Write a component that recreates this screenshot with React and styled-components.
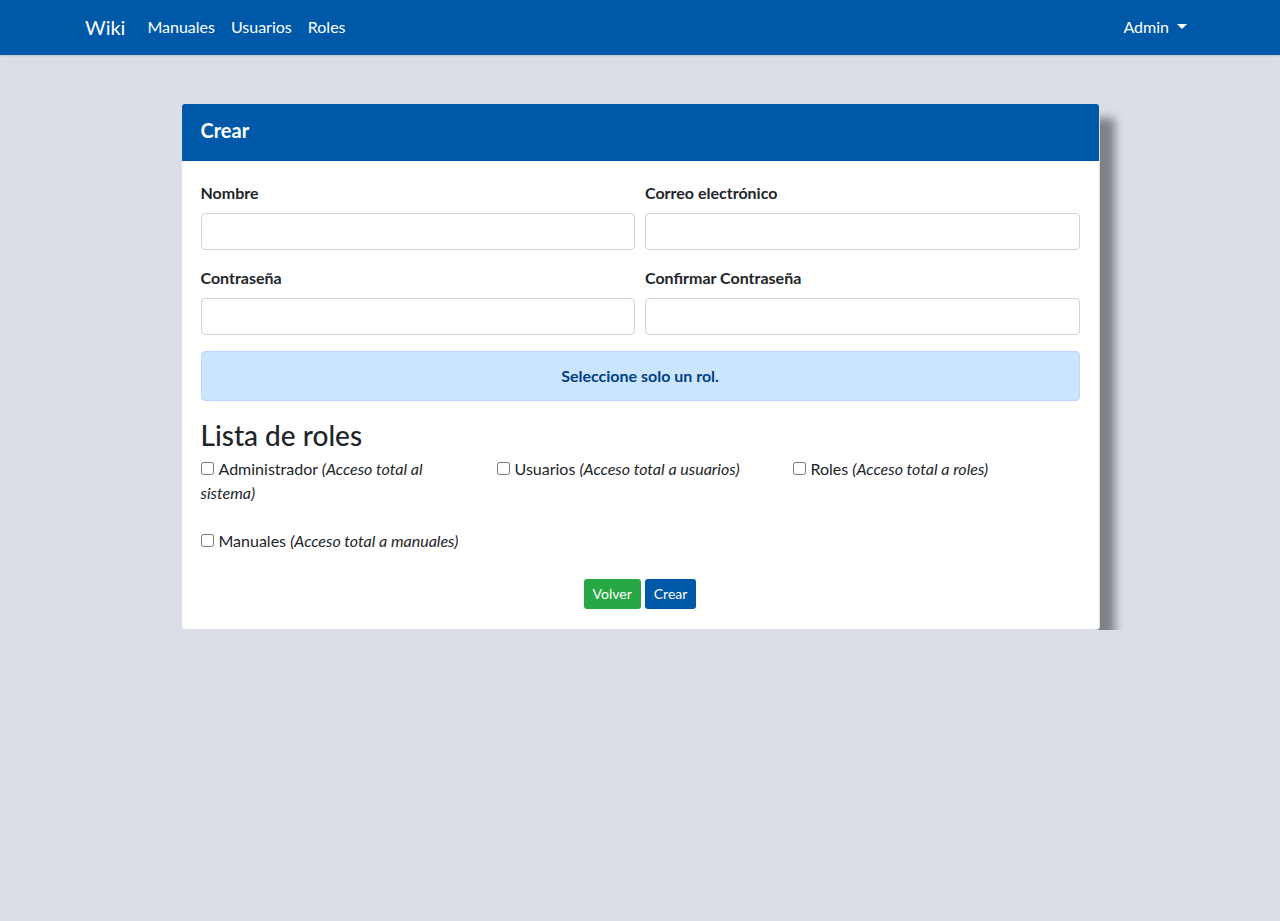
import React from 'react';
import styled, { createGlobalStyle } from 'styled-components';

const ROLES = [
  { name: 'Administrador', desc: 'Acceso total al sistema' },
  { name: 'Usuarios', desc: 'Acceso total a usuarios' },
  { name: 'Roles', desc: 'Acceso total a roles' },
  { name: 'Manuales', desc: 'Acceso total a manuales' },
];

const FIELDS = [
  { label: 'Nombre', type: 'text' },
  { label: 'Correo electrónico', type: 'email' },
  { label: 'Contraseña', type: 'password' },
  { label: 'Confirmar Contraseña', type: 'password' },
];

const App = () => {
  return (
    <>
      <GlobalStyle />
      <Navbar>
        <NavContainer>
          <Brand>Wiki</Brand>
          <NavLinks>
            <NavLink>Manuales</NavLink>
            <NavLink>Usuarios</NavLink>
            <NavLink>Roles</NavLink>
          </NavLinks>
          <Dropdown>
            Admin <Caret />
          </Dropdown>
        </NavContainer>
      </Navbar>
      <Main>
        <Card>
          <CardHeader>Crear</CardHeader>
          <CardBody>
            <FormGrid>
              {FIELDS.map((f) => (
                <FormGroup key={f.label}>
                  <Label>{f.label}</Label>
                  <Input type={f.type} />
                </FormGroup>
              ))}
            </FormGrid>
            <Alert>Seleccione solo un rol.</Alert>
            <Title>Lista de roles</Title>
            <RoleGrid>
              {ROLES.map((r) => (
                <RoleItem key={r.name}>
                  <Check type='checkbox' />
                  {r.name} <em>({r.desc})</em>
                </RoleItem>
              ))}
            </RoleGrid>
            <Actions>
              <Btn $color='#28a745'>Volver</Btn>
              <Btn $color='#0059a8'>Crear</Btn>
            </Actions>
          </CardBody>
        </Card>
      </Main>
    </>
  );
};

export default App;

const GlobalStyle = createGlobalStyle`
  body {
    margin: 0;
    background: #dadee6;
    font-family: 'Lato', 'Open Sans', sans-serif;
    font-size: 16px;
    line-height: 1.5;
    color: #212529;
  }
`;

const Navbar = styled.nav`
  height: 55px;
  background: #0059a8;
  box-shadow: 0 1px 2px rgba(0, 0, 0, 0.15);
`;

const NavContainer = styled.div`
  width: 1140px;
  margin: 0 auto;
  padding: 0 15px 2px;
  box-sizing: border-box;
  height: 100%;
  display: flex;
  align-items: center;
`;

const Brand = styled.span`
  font-size: 20px;
  color: #fff;
  margin-right: 14px;
`;

const NavLinks = styled.div`
  display: flex;
  flex: 1;
`;

const NavLink = styled.span`
  color: #fff;
  padding: 0 8px;
`;

const Dropdown = styled.span`
  color: #fff;
  padding: 0 8px;
  display: flex;
  align-items: center;
`;

const Caret = styled.span`
  display: inline-block;
  margin-left: 8px;
  border-top: 5px solid #fff;
  border-left: 5px solid transparent;
  border-right: 5px solid transparent;
`;

const Main = styled.main`
  padding-top: 48px;
  display: flex;
  justify-content: center;
`;

const Card = styled.div`
  width: 919px;
  box-sizing: border-box;
  background: #fff;
  border: 1px solid rgba(0, 0, 0, 0.125);
  border-radius: 4px;
  box-shadow: 15px 15px 10px rgba(0, 0, 0, 0.42);
  overflow: hidden;
`;

const CardHeader = styled.div`
  background: #0059a8;
  color: #fff;
  font-weight: 700;
  font-size: 20px;
  padding: 0 19px 6px;
  height: 57px;
  box-sizing: border-box;
  display: flex;
  align-items: center;
`;

const CardBody = styled.div`
  padding: 20px 19px 20px;
`;

const FormGrid = styled.div`
  display: grid;
  grid-template-columns: 1fr 1fr;
  column-gap: 10px;
  row-gap: 16px;
`;

const FormGroup = styled.div`
  display: flex;
  flex-direction: column;
`;

const Label = styled.label`
  font-weight: 700;
  margin-bottom: 8px;
`;

const Input = styled.input`
  height: 37px;
  box-sizing: border-box;
  border: 1px solid #ced4da;
  border-radius: 4px;
  padding: 6px 12px;
  font: inherit;
`;

const Alert = styled.div`
  margin-top: 16px;
  height: 50px;
  box-sizing: border-box;
  display: flex;
  align-items: center;
  justify-content: center;
  background: #cce5ff;
  border: 1px solid #b8daff;
  border-radius: 4px;
  color: #004085;
  font-weight: 700;
`;

const Title = styled.h2`
  font-size: 28px;
  font-weight: 500;
  line-height: 1.2;
  margin: 18px 0 4px;
`;

const RoleGrid = styled.div`
  display: grid;
  grid-template-columns: repeat(3, 266px);
  column-gap: 30px;
  row-gap: 24px;
`;

const RoleItem = styled.label`
  display: block;

  em {
    font-style: italic;
  }
`;

const Check = styled.input`
  width: 13px;
  height: 13px;
  margin: 0 5px 0 0;
  vertical-align: 0;
`;

const Actions = styled.div`
  display: flex;
  justify-content: center;
  gap: 4px;
  margin-top: 26px;
`;

const Btn = styled.button`
  height: 30px;
  padding: 0 9px;
  border: none;
  border-radius: 3px;
  background: ${(p) => p.$color};
  color: #fff;
  font-family: inherit;
  font-size: 14px;
`;
